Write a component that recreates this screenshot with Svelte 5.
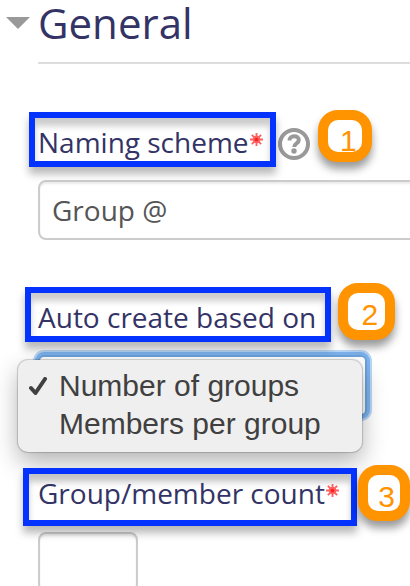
<script lang="ts">
	let expanded = $state(true);
	let menuOpen = $state(true);
	let scheme = $state('Group @');
	let basis = $state('groups');
	let count = $state('');

	const options = [
		{ value: 'groups', label: 'Number of groups' },
		{ value: 'members', label: 'Members per group' }
	];

	function choose(value: string) {
		basis = value;
		menuOpen = false;
	}
</script>

{#snippet required()}
	<svg class="required" viewBox="0 0 14 14" role="img" aria-label="Required">
		<path d="M7 0v14M0 7h14M2 2l10 10M12 2L2 12" />
		<circle cx="7" cy="7" r="3" />
	</svg>
{/snippet}

<form>
	<h2>
		<button type="button" class="toggle" aria-expanded={expanded} onclick={() => (expanded = !expanded)}>
			<svg viewBox="0 0 24 12" aria-hidden="true"><path d="M0 0h24L12 12z" /></svg>
			General
		</button>
	</h2>

	{#if expanded}
		<div class="fields">
			<div class="row">
				<label class="boxed naming" for="scheme">Naming scheme{@render required()}</label>
				<button type="button" class="help" aria-label="Help with naming scheme">
					<svg viewBox="0 0 32 32" aria-hidden="true">
						<circle cx="16" cy="16" r="14" />
						<path d="M11.5 12.5C11.5 6.8 20.8 6.8 20.8 12c0 3.4-4.6 3.2-4.6 7" />
						<circle class="dot" cx="16" cy="23" r="2.7" />
					</svg>
				</button>
				<span class="badge one">1</span>
			</div>
			<input id="scheme" class="text" type="text" bind:value={scheme} />

			<div class="row second">
				<label class="boxed auto" for="basis">Auto create based on</label>
				<span class="badge two">2</span>
			</div>
			<div class="picker">
				<select id="basis" bind:value={basis}>
					{#each options as option}
						<option value={option.value}>{option.label}</option>
					{/each}
				</select>
				{#if menuOpen}
					<div class="menu" role="listbox" aria-label="Auto create based on">
						{#each options as option}
							<button
								type="button"
								role="option"
								aria-selected={basis === option.value}
								onclick={() => choose(option.value)}
							>
								<span class="tick">
									{#if basis === option.value}
										<svg viewBox="0 0 18 18" aria-hidden="true"><path d="M2 11l4.5 5L16 2" /></svg>
									{/if}
								</span>
								{option.label}
							</button>
						{/each}
					</div>
				{/if}
			</div>

			<div class="row third">
				<label class="boxed count" for="count">Group/member count{@render required()}</label>
				<span class="badge three">3</span>
			</div>
			<input id="count" class="text short" type="text" bind:value={count} />
		</div>
	{/if}
</form>

<style>
	:global(body) {
		background: #fff;
	}

	form {
		box-sizing: border-box;
		height: 100vh;
		overflow: hidden;
		padding-left: 38px;
		font-family: 'Open Sans', sans-serif;
		font-size: 28px;
		color: #555;
	}

	button {
		border: 0;
		padding: 0;
		background: none;
		font: inherit;
		color: inherit;
		cursor: pointer;
	}

	h2 {
		margin: 0;
		padding-bottom: 16px;
		border-bottom: 2px solid #ddd;
		font-size: 42px;
		font-weight: 400;
		line-height: 46px;
		color: #333366;
	}

	.toggle {
		display: flex;
		align-items: center;
		gap: 8px;
		margin-left: -32px;
	}

	.toggle svg {
		width: 24px;
		height: 12px;
		fill: #999;
	}

	.fields {
		padding-top: 48px;
	}

	.row {
		display: flex;
		align-items: flex-start;
		margin-bottom: 13px;
		white-space: nowrap;
	}

	.second {
		margin-top: 47px;
	}

	.third {
		margin-top: 52px;
		margin-bottom: 6px;
	}

	.boxed {
		position: relative;
		z-index: 1;
		display: flex;
		box-sizing: border-box;
		border: 6px solid #0433ff;
		padding: 5px 8px 0;
		line-height: 38px;
		color: #333366;
		box-shadow:
			0 7px 8px rgba(0, 0, 0, 0.28),
			inset 0 8px 6px rgba(0, 0, 0, 0.2);
	}

	.naming {
		margin-left: -9px;
		padding-right: 7px;
		padding-left: 3px;
	}

	.auto {
		margin-left: -13px;
		padding-right: 9px;
		padding-left: 7px;
	}

	.count {
		margin-left: -15px;
		padding: 0 12px 8px 9px;
	}

	.required {
		width: 13px;
		height: 13px;
		margin: 10px 0 0 1px;
		fill: #ff2020;
		stroke: #ff6060;
		stroke-width: 2;
	}

	.help {
		margin: 16px 0 0 2px;
		height: 32px;
	}

	.help svg {
		display: block;
		width: 32px;
		height: 32px;
		fill: none;
		stroke: #999;
		stroke-width: 4;
	}

	.help .dot {
		fill: #999;
		stroke: none;
	}

	.badge {
		position: relative;
		z-index: 2;
		display: flex;
		align-items: flex-end;
		justify-content: flex-end;
		box-sizing: border-box;
		width: 54px;
		height: 52px;
		margin-top: -2px;
		border: 10px solid #ff9300;
		border-radius: 20px;
		padding-right: 5px;
		background: #fff;
		font-family: 'Liberation Sans', sans-serif;
		font-size: 30px;
		line-height: 28px;
		color: #ff9300;
		box-shadow: 0 7px 8px rgba(0, 0, 0, 0.4);
	}

	.one {
		margin-left: 8px;
		line-height: 22px;
	}

	.two {
		width: 57px;
		height: 57px;
		margin-top: -4px;
		margin-left: 7px;
		padding-right: 7px;
		line-height: 30px;
	}

	.three {
		height: 56px;
		margin-top: -3px;
		margin-left: 1px;
	}

	.text {
		display: block;
		box-sizing: border-box;
		width: calc(100% + 12px);
		height: 60px;
		border: 2px solid #ccc;
		border-radius: 8px;
		padding: 0 12px;
		background: #fff;
		font: inherit;
		color: #555;
		outline: none;
		box-shadow: inset 0 2px 2px rgba(0, 0, 0, 0.08);
	}

	.short {
		width: 100px;
		background: transparent;
	}

	.picker {
		position: relative;
		margin-right: 43px;
	}

	select {
		display: block;
		box-sizing: border-box;
		width: 100%;
		height: 61px;
		border: 2px solid #6ba3dc;
		border-radius: 6px;
		background: #fff;
		font: inherit;
		color: #555;
		outline: none;
		box-shadow:
			0 0 0 3px #7db3ee,
			0 0 0 5px #b9d7f7;
	}

	.menu {
		position: absolute;
		top: 5px;
		left: -20px;
		right: 5px;
		border-radius: 10px;
		padding: 7px 0 9px;
		background: #efefef;
		font-family: 'Liberation Sans', sans-serif;
		font-size: 30px;
		line-height: 38px;
		color: #404040;
		box-shadow:
			0 0 1px 1px rgba(0, 0, 0, 0.18),
			0 10px 24px rgba(0, 0, 0, 0.3);
	}

	.menu button {
		display: flex;
		align-items: center;
		width: 100%;
		padding-left: 11px;
		white-space: nowrap;
	}

	.tick {
		display: flex;
		width: 30px;
	}

	.tick svg {
		width: 18px;
		height: 18px;
		fill: none;
		stroke: #404040;
		stroke-width: 4;
		stroke-linecap: round;
		stroke-linejoin: round;
	}
</style>
